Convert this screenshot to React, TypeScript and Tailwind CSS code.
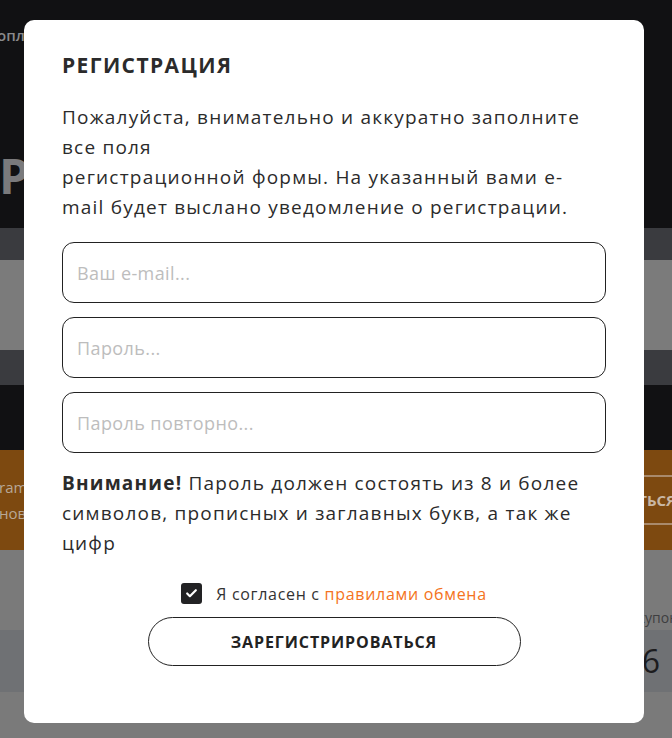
import { Check } from "lucide-react"

const font = { fontFamily: '"Open Sans", "Noto Sans", sans-serif' }

function Backdrop() {
  return (
    <div className="flex h-[738px] w-[672px] flex-col overflow-hidden">
      <div className="flex h-[228px] flex-col bg-[#111113]">
        <div className="mt-[25px] -ml-[3px] text-[15px] font-semibold leading-5 text-[#8a8a8c]">оплата</div>
        <div className="mt-[103px] -ml-[1px] text-[48px] font-bold leading-[56px] text-[#7a7a7c]">Регистрация</div>
      </div>
      <div className="h-[32px] bg-[#3a3b3f]" />
      <div className="h-[90px] bg-[#7b7b7b]" />
      <div className="h-[35px] bg-[#3a3b3f]" />
      <div className="h-[65px] bg-[#111113]" />
      <div className="flex h-[100px] items-center justify-between bg-[#7d4910]">
        <div className="-ml-[1px] text-[15px] leading-[26px] text-[#b8a896]">
          <div>ram канал</div>
          <div>новости</div>
        </div>
        <div className="-mr-[20px] flex h-[50px] items-center border-y-2 border-l-2 border-[#a98a6c] pl-6 pr-[16px] text-[15px] font-bold text-[#c9b7a4]">
          ПОДПИСАТЬСЯ
        </div>
      </div>
      <div className="flex h-[80px] items-end justify-end bg-[#7a7a7a] pb-[2px]">
        <span className="-mr-[6px] text-[14px] text-[#3e3e40]">купон</span>
      </div>
      <div className="flex h-[62px] items-center justify-end bg-[#6f7174]">
        <span className="mr-[12px] text-[32px] leading-none text-[#1c1c1e]">6</span>
      </div>
      <div className="flex-1 bg-[#7a7a7a]" />
    </div>
  )
}

function Field({ placeholder, type = "text" }: { placeholder: string; type?: string }) {
  return (
    <input
      type={type}
      placeholder={placeholder}
      className="h-[61px] w-full rounded-[12px] border border-[#222] bg-white px-[14px] text-[18px] tracking-[0.4px] text-[#222] outline-none placeholder:text-[#bdbdbd]"
      style={font}
    />
  )
}

export default function App() {
  return (
    <div className="relative h-[738px] w-[672px] overflow-hidden" style={font}>
      <Backdrop />
      <div className="absolute left-[24px] top-[20px] h-[703px] w-[620px] rounded-[10px] bg-white px-[38px] pt-[30px] text-[#2b2b2b]">
        <h2 className="text-[21px] font-bold leading-[30px] tracking-[1.4px] text-[#2b2b2b]">РЕГИСТРАЦИЯ</h2>
        <p className="mt-[22px] text-[19px] leading-[30px] tracking-[1.2px]">
          Пожалуйста, внимательно и аккуратно заполните
          <br />
          все поля
          <br />
          регистрационной формы. На указанный вами e-
          <br />
          mail будет выслано уведомление о регистрации.
        </p>
        <div className="mt-[20px] flex flex-col gap-[14px]">
          <Field placeholder="Ваш e-mail..." type="email" />
          <Field placeholder="Пароль..." type="password" />
          <Field placeholder="Пароль повторно..." type="password" />
        </div>
        <p className="mt-[15px] text-[19px] leading-[30px] tracking-[1.2px]">
          <b className="font-bold">Внимание!</b> Пароль должен состоять из 8 и более
          <br />
          символов, прописных и заглавных букв, а так же
          <br />
          цифр
        </p>
        <label className="mt-[25px] flex items-center justify-center gap-[14px]">
          <span className="flex h-[21px] w-[21px] items-center justify-center rounded-[3px] bg-[#222224]">
            <Check className="h-[13px] w-[13px] text-white" strokeWidth={4} />
          </span>
          <span className="text-[16px] leading-5 tracking-[0.7px] text-[#333]">
            Я согласен с <a className="text-[#f47321]">правилами обмена</a>
          </span>
        </label>
        <div className="mt-[13px] flex justify-center">
          <button className="h-[49px] w-[373px] rounded-full border border-[#222] bg-white text-[16px] font-bold tracking-[0.9px] text-[#222]">
            ЗАРЕГИСТРИРОВАТЬСЯ
          </button>
        </div>
      </div>
    </div>
  )
}
